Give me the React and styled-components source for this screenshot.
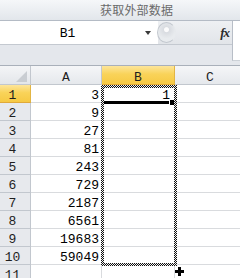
import React from 'react';
import styled, { createGlobalStyle } from 'styled-components';

const GlobalStyle = createGlobalStyle`
    html, body {
        margin: 0;
        padding: 0;
        background: #fff;
    }
    body {
        width: 240px;
        height: 278px;
        overflow: hidden;
        font-family: "Liberation Mono", "DejaVu Sans Mono", monospace;
    }
`;

const Window = styled.div`
    width: 240px;
    height: 278px;
    overflow: hidden;
    display: flex;
    flex-direction: column;
`;

const TitleBand = styled.div`
    flex: none;
    height: 20px;
    padding-left: 100px;
    border-bottom: 1px solid #b4bbc5;
    background: linear-gradient(#f5f7f9, #e2e6eb);
    font: 12px/20px "Noto Sans CJK SC", sans-serif;
    color: #6a6a6a;
    letter-spacing: 0.2px;
`;

const FormulaArea = styled.div`
    flex: none;
    height: 44px;
    display: flex;
    background: #e4e7ec;
`;

const FormulaLeft = styled.div`
    width: 232px;
    display: flex;
    flex-direction: column;
`;

const NameRow = styled.div`
    height: 23px;
    display: flex;
    border-bottom: 1px solid #c4c9d0;
`;

const NameBox = styled.div`
    width: 158px;
    display: flex;
    align-items: center;
    background: #fff;
`;

const NameText = styled.span`
    width: 135px;
    text-align: center;
    font-size: 13px;
    line-height: 14px;
    padding-top: 3px;
    color: #000;
`;

const DropArrow = styled.span`
    margin-left: 10px;
    margin-top: 1px;
    border-left: 3px solid transparent;
    border-right: 3px solid transparent;
    border-top: 4px solid #3a3a3a;
`;

const Splitter = styled.div`
    flex: 1;
    display: flex;
    align-items: center;
    background: linear-gradient(#eef0f3, #e2e5e9);
`;

const Knob = styled.span`
    width: 17px;
    height: 19px;
    margin-left: -1px;
    border-radius: 50%;
    border: 1px solid #c3c8cf;
    border-right-color: transparent;
    background: radial-gradient(circle at 50% 35%, #fbfbfc 0 2px, #d9dce1 3px, #e8ebee 9px);
`;

const Fx = styled.span`
    margin-left: auto;
    margin-right: 3px;
    font: italic bold 13px/14px "Liberation Serif", serif;
    color: #2b2b2b;
    letter-spacing: -1px;
`;

const FormulaInput = styled.div`
    flex: 1;
    height: 39px;
    background: #fff;
    border-left: 1px solid #b8bec7;
    border-bottom: 1px solid #cdd2d8;
`;

const Sheet = styled.div`
    position: relative;
    flex: none;
    border-top: 1px solid #a9b0ba;
    display: grid;
    grid-template-columns: 31px 71px 73px 71px;
    grid-template-rows: 19px repeat(11, 18px);
    width: 246px;
`;

const Corner = styled.div`
    grid-column: 1;
    grid-row: 1;
    position: relative;
    background: linear-gradient(#f4f5f7, #e3e6ea);
    border-right: 1px solid #c2c7ce;
    border-bottom: 1px solid #c2c7ce;

    &::after {
        content: '';
        position: absolute;
        right: 3px;
        bottom: 2px;
        width: 11px;
        height: 11px;
        background: #c9cdd2;
        clip-path: polygon(100% 0, 100% 100%, 0 100%);
    }
`;

const HeaderCell = styled.div`
    grid-row: ${p => p.$r};
    grid-column: ${p => p.$c};
    display: flex;
    align-items: flex-end;
    justify-content: center;
    font-size: 13px;
    line-height: 12px;
    color: #1e1e1e;
    background: ${p => p.$active
        ? 'linear-gradient(#fde59a, #f9d359 45%, #f6c944)'
        : 'linear-gradient(#f5f6f8, #e5e8ec)'};
    border-right: 1px solid ${p => p.$active ? '#e2b544' : '#c2c7ce'};
    border-bottom: 1px solid ${p => p.$active ? '#e0a93a' : '#c2c7ce'};
`;

const RowHead = styled(HeaderCell)`
    padding-right: 5px;
    background: ${p => p.$active
        ? 'linear-gradient(#fde59a, #f9d359 45%, #f6c944)'
        : '#e7e9ed'};
`;

const Cell = styled.div`
    grid-row: ${p => p.$r};
    grid-column: ${p => p.$c};
    display: flex;
    align-items: flex-end;
    justify-content: flex-end;
    padding-right: ${p => p.$pad || 2}px;
    font-size: 13px;
    line-height: 12px;
    color: #000;
    background: #fff;
    border-right: 1px solid #d9dbde;
    border-bottom: 1px solid #d9dbde;
    overflow: hidden;
`;

const ActiveMark = styled.div`
    grid-column: 3;
    grid-row: 2;
    align-self: end;
    position: relative;
    height: 3px;
    margin: 0 4px -1px 2px;
    background: #000;

    &::after {
        content: '';
        position: absolute;
        right: -4px;
        top: -2px;
        width: 4px;
        height: 5px;
        background: #000;
        border: 1px solid #fff;
    }
`;

const Ants = styled.div`
    grid-column: 3;
    grid-row: 2 / span 10;
    margin: 0 -2px -1px -1px;
    padding: 3px;
    background: repeating-conic-gradient(#111 0 25%, #f2f2f2 0 50%) 0 0 / 2px 2px;
    -webkit-mask: linear-gradient(#000 0 0) content-box, linear-gradient(#000 0 0);
    -webkit-mask-composite: xor;
    mask-composite: exclude;
    pointer-events: none;
`;

const Cursor = styled.svg`
    position: absolute;
    left: 175px;
    top: 201px;
`;

const values = [3, 9, 27, 81, 243, 729, 2187, 6561, 19683, 59049, ''];

export default function App() {
    return (
        <Window>
            <GlobalStyle />
            <TitleBand>获取外部数据</TitleBand>
            <FormulaArea>
                <FormulaLeft>
                    <NameRow>
                        <NameBox>
                            <NameText>B1</NameText>
                            <DropArrow />
                        </NameBox>
                        <Splitter>
                            <Knob />
                            <Fx>fx</Fx>
                        </Splitter>
                    </NameRow>
                </FormulaLeft>
                <FormulaInput />
            </FormulaArea>
            <Sheet>
                <Corner />
                <HeaderCell $r={1} $c={2}>A</HeaderCell>
                <HeaderCell $r={1} $c={3} $active>B</HeaderCell>
                <HeaderCell $r={1} $c={4}>C</HeaderCell>
                {values.map((v, i) => (
                    <React.Fragment key={i}>
                        <RowHead $r={i + 2} $c={1} $active={i === 0}>{i + 1}</RowHead>
                        <Cell $r={i + 2} $c={2}>{v}</Cell>
                        <Cell $r={i + 2} $c={3} $pad={4}>{i === 0 ? 1 : ''}</Cell>
                        <Cell $r={i + 2} $c={4} />
                    </React.Fragment>
                ))}
                <ActiveMark />
                <Ants />
                <Cursor width="9" height="9" viewBox="0 0 9 9">
                    <rect x="3" y="0" width="3" height="9" fill="#000" />
                    <rect x="0" y="3" width="9" height="3" fill="#000" />
                </Cursor>
            </Sheet>
        </Window>
    );
}
